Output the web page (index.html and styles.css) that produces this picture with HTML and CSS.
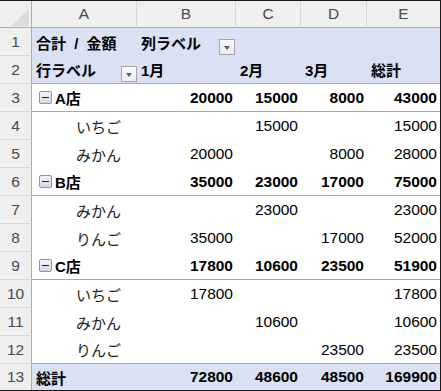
FILE: index.html
```html
<!DOCTYPE html>
<html lang="ja">
<head>
  <meta charset="UTF-8" />
  <title>ピボットテーブル</title>
  <link rel="stylesheet" href="styles.css">
</head>
<body>
  <div class="sheet">
    <div class="row head">
      <div class="corner"></div>
      <div class="ch">A</div>
      <div class="ch">B</div>
      <div class="ch">C</div>
      <div class="ch">D</div>
      <div class="ch">E</div>
    </div>

    <div class="row band">
      <div class="rh">1</div>
      <div class="cell bold title">合計 / 金額</div>
      <div class="cell bold with-dd">列ラベル<span class="dd"></span></div>
      <div class="cell"></div>
      <div class="cell"></div>
      <div class="cell"></div>
    </div>
    <div class="row band rule">
      <div class="rh">2</div>
      <div class="cell bold with-dd flush">行ラベル<span class="dd"></span></div>
      <div class="cell bold">1月</div>
      <div class="cell bold">2月</div>
      <div class="cell bold">3月</div>
      <div class="cell bold">総計</div>
    </div>

    <div class="row group rule">
      <div class="rh">3</div>
      <div class="cell"><span class="toggle"></span>A店</div>
      <div class="cell num">20000</div>
      <div class="cell num">15000</div>
      <div class="cell num">8000</div>
      <div class="cell num">43000</div>
    </div>
    <div class="row item">
      <div class="rh">4</div>
      <div class="cell label">いちご</div>
      <div class="cell num"></div>
      <div class="cell num">15000</div>
      <div class="cell num"></div>
      <div class="cell num">15000</div>
    </div>
    <div class="row item">
      <div class="rh">5</div>
      <div class="cell label">みかん</div>
      <div class="cell num">20000</div>
      <div class="cell num"></div>
      <div class="cell num">8000</div>
      <div class="cell num">28000</div>
    </div>

    <div class="row group rule">
      <div class="rh">6</div>
      <div class="cell"><span class="toggle"></span>B店</div>
      <div class="cell num">35000</div>
      <div class="cell num">23000</div>
      <div class="cell num">17000</div>
      <div class="cell num">75000</div>
    </div>
    <div class="row item">
      <div class="rh">7</div>
      <div class="cell label">みかん</div>
      <div class="cell num"></div>
      <div class="cell num">23000</div>
      <div class="cell num"></div>
      <div class="cell num">23000</div>
    </div>
    <div class="row item">
      <div class="rh">8</div>
      <div class="cell label">りんご</div>
      <div class="cell num">35000</div>
      <div class="cell num"></div>
      <div class="cell num">17000</div>
      <div class="cell num">52000</div>
    </div>

    <div class="row group rule">
      <div class="rh">9</div>
      <div class="cell"><span class="toggle"></span>C店</div>
      <div class="cell num">17800</div>
      <div class="cell num">10600</div>
      <div class="cell num">23500</div>
      <div class="cell num">51900</div>
    </div>
    <div class="row item">
      <div class="rh">10</div>
      <div class="cell label">いちご</div>
      <div class="cell num">17800</div>
      <div class="cell num"></div>
      <div class="cell num"></div>
      <div class="cell num">17800</div>
    </div>
    <div class="row item">
      <div class="rh">11</div>
      <div class="cell label">みかん</div>
      <div class="cell num"></div>
      <div class="cell num">10600</div>
      <div class="cell num"></div>
      <div class="cell num">10600</div>
    </div>
    <div class="row item rule">
      <div class="rh">12</div>
      <div class="cell label">りんご</div>
      <div class="cell num"></div>
      <div class="cell num"></div>
      <div class="cell num">23500</div>
      <div class="cell num">23500</div>
    </div>

    <div class="row band total">
      <div class="rh">13</div>
      <div class="cell">総計</div>
      <div class="cell num">72800</div>
      <div class="cell num">48600</div>
      <div class="cell num">48500</div>
      <div class="cell num">169900</div>
    </div>
  </div>
</body>
</html>
```

FILE: styles.css
```css
:root {
  --hdr-bg: #efefef;
  --hdr-line: #d6d6d6;
  --hdr-edge: #ababab;
  --band: #d9e1f2;
  --rule: #8ea9db;
  --text: #000;
  --muted: #4a4a4a;
}
* { box-sizing: border-box; margin: 0; padding: 0; }
body {
  font-family: "Liberation Sans", "Noto Sans CJK JP", sans-serif;
  font-size: 15px;
  color: var(--text);
  background: #fff;
}
.sheet {
  width: 441px;
  border: 1px solid #1a1a1a;
  border-left: none;
}
.row {
  display: grid;
  grid-template-columns: 32px 105px 99px 65px 66px 73px;
  height: 28px;
}
.row.head { height: 27px; }
.row.total { height: 26px; }

/* column / row headers */
.corner,
.ch {
  background: var(--hdr-bg);
  border-right: 1px solid var(--hdr-line);
  border-bottom: 1px solid var(--hdr-edge);
}
.corner {
  border-right-color: var(--hdr-edge);
  background:
    linear-gradient(to bottom right, transparent 50%, #dcdcdc 50%) right 2px bottom 1px / 18px 18px no-repeat,
    var(--hdr-bg);
}
.ch:last-child { border-right: none; }
.ch,
.rh {
  display: flex;
  align-items: center;
  justify-content: center;
  color: var(--muted);
  font-size: 15.5px;
}
.rh {
  background: var(--hdr-bg);
  border-right: 1px solid var(--hdr-edge);
  border-bottom: 1px solid var(--hdr-line);
}
.row.total .rh { border-bottom: none; }

/* pivot cells */
.cell {
  display: flex;
  align-items: center;
  padding: 0 3px 0 4px;
  white-space: nowrap;
  overflow: hidden;
}
.cell.num { justify-content: flex-end; font-size: 15.5px; }
.bold,
.group .cell,
.total .cell { font-weight: 700; }
.title { word-spacing: 4px; }
.row.band .cell { background: var(--band); }
.row.rule .cell { border-bottom: 1px solid var(--rule); }
.item .label {
  padding-left: 44px;
  font-family: "Noto Sans CJK JP", sans-serif;
  color: #1c1c1c;
}

/* filter dropdown button */
.with-dd { padding-right: 1px; }
.with-dd.flush { padding-right: 0; }
.dd {
  width: 16px;
  height: 16px;
  margin-left: auto;
  align-self: flex-end;
  margin-bottom: 1px;
  border: 1px solid #a6a6a6;
  background: linear-gradient(#fafafa, #ececec);
  display: flex;
  align-items: center;
  justify-content: center;
}
.dd::after {
  content: "";
  margin-top: 2px;
  border-top: 4px solid #5e5e5e;
  border-left: 3px solid transparent;
  border-right: 3px solid transparent;
}

/* collapse button */
.toggle {
  width: 13px;
  height: 13px;
  margin: 0 3px 0 3px;
  border: 1px solid #8797ad;
  border-radius: 2px;
  background: linear-gradient(#f3f5f8, #d3d9e2);
  display: flex;
  align-items: center;
  justify-content: center;
  flex-shrink: 0;
}
.toggle::after {
  content: "";
  width: 7px;
  height: 1px;
  background: #1f2a44;
}
```
